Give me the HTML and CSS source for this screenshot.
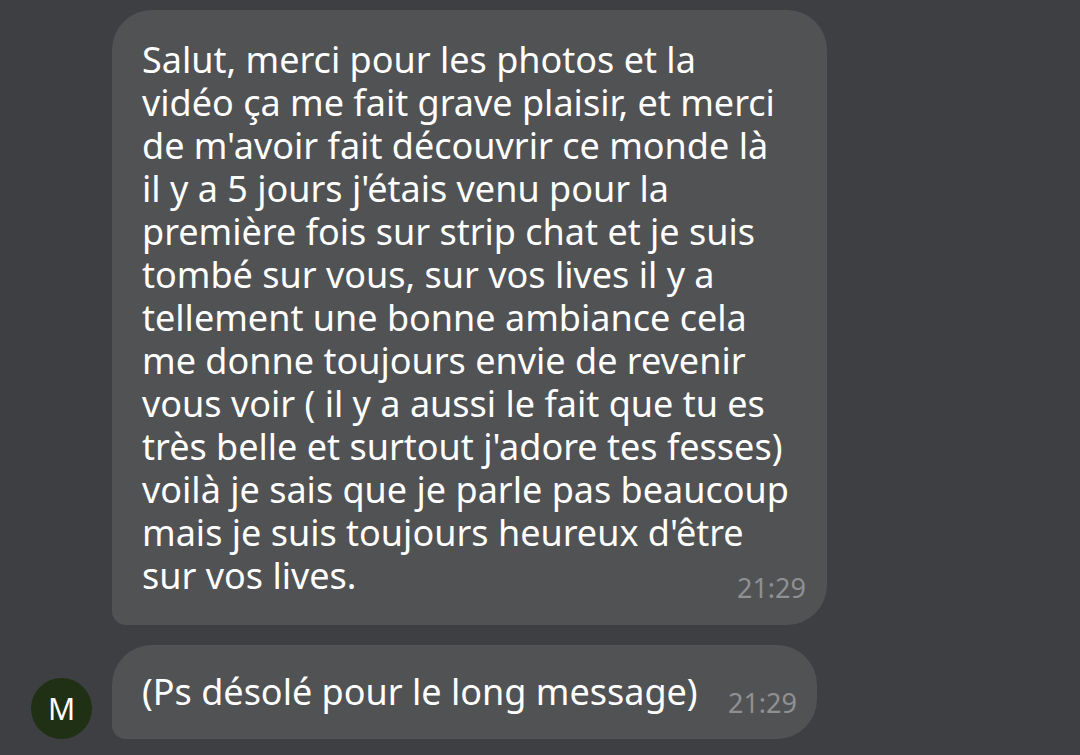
FILE: index.html
```html
<!DOCTYPE html>
<html lang="fr">
<head>
    <meta charset="UTF-8">
    <meta name="viewport" content="width=device-width, initial-scale=1.0">
    <title>Messages</title>
    <link rel="stylesheet" href="styles.css">
</head>
<body>

<main class="chat">
    <article class="message long">
        <p class="text">
            Salut, merci pour les photos et la<br>
            vidéo ça me fait grave plaisir, et merci<br>
            de m'avoir fait découvrir ce monde là<br>
            il y a 5 jours j'étais venu pour la<br>
            première fois sur strip chat et je suis<br>
            tombé sur vous, sur vos lives il y a<br>
            tellement une bonne ambiance cela<br>
            me donne toujours envie de revenir<br>
            vous voir ( il y a aussi le fait que tu es<br>
            très belle et surtout j'adore tes fesses)<br>
            voilà je sais que je parle pas beaucoup<br>
            mais je suis toujours heureux d'être<br>
            sur vos lives.
        </p>
        <time class="time">21:29</time>
    </article>

    <div class="row">
        <div class="avatar">M</div>
        <article class="message short">
            <p class="text">(Ps désolé pour le long message)</p>
            <time class="time">21:29</time>
        </article>
    </div>
</main>

</body>
</html>
```
FILE: styles.css
```css
* {
    box-sizing: border-box;
}

/* General body styling */
body {
    margin: 0;
    background-color: #3e3f43;
    color: #ffffff;
    font-family: 'Noto Sans', 'Open Sans', sans-serif;
}

.chat {
    display: flex;
    flex-direction: column;
    gap: 20px;
    padding: 10px 31px 16px;
}

/* Message bubbles */
.message {
    display: flex;
    align-items: flex-end;
    width: 100%;
    background-color: #515254;
    border-radius: 40px 40px 40px 14px;
}

.long {
    position: relative;
    max-width: 715px;
    margin-left: 81px;
    padding: 28px 30px;
}

.text {
    margin: 0;
    font-size: 36px;
    line-height: 43px;
}

.time {
    color: #8f9092;
    font-size: 27px;
    line-height: 32px;
}

/* The time lies over the corner of the long message */
.long .time {
    position: absolute;
    right: 21px;
    bottom: 21px;
}

.row {
    display: flex;
    align-items: flex-end;
    gap: 20px;
}

.short {
    max-width: 705px;
    justify-content: space-between;
    padding: 25px 20px 20px 30px;
}

.short .text {
    padding-bottom: 6px;
}

/* Sender avatar */
.avatar {
    display: flex;
    flex-shrink: 0;
    align-items: center;
    justify-content: center;
    width: 61px;
    height: 61px;
    border-radius: 50%;
    background-color: #203014;
    font-size: 30px;
}
```
